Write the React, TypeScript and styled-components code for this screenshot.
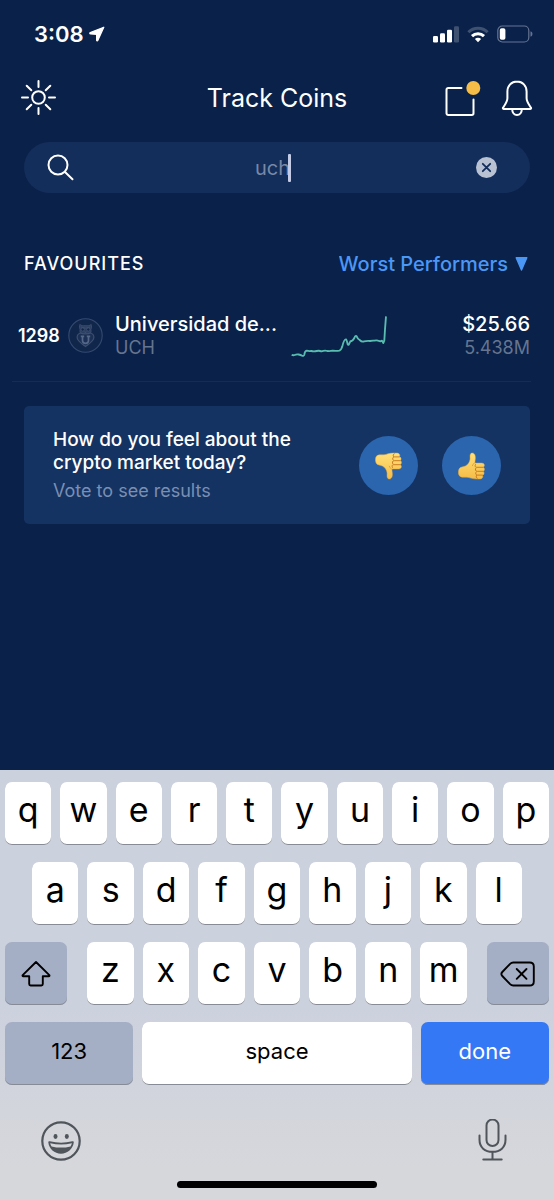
import React, { useState } from "react";
import styled, { createGlobalStyle } from "styled-components";

const GlobalStyle = createGlobalStyle`
  * { box-sizing: border-box; }
  body { margin: 0; background: #0a214a; }
  body, button, input, select { font-family: Inter, "Liberation Sans", sans-serif; }
  button { margin: 0; padding: 0; border: 0; background: none; color: inherit; cursor: pointer; }
  svg { display: block; flex: none; }
`;

const Screen = styled.div`
  display: flex;
  flex-direction: column;
  min-height: 100vh;
  background: #0a214a;
  color: #fff;
`;

const StatusBar = styled.div`
  display: flex;
  align-items: center;
  justify-content: space-between;
  height: 68px;
  padding: 0 21px 0 34px;
`;

const StatusGroup = styled.div<{ $gap: number }>`
  display: flex;
  align-items: center;
  gap: ${(p) => p.$gap}px;
`;

const Clock = styled.span`
  font-size: 22px;
  font-weight: 600;
  line-height: 28px;
`;

const Header = styled.header`
  display: grid;
  grid-template-columns: 1fr auto 1fr;
  align-items: center;
  height: 60px;
  padding: 0 21px;
`;

const HeaderActions = styled.div`
  display: flex;
  justify-content: flex-end;
  gap: 20px;
`;

const IconButton = styled.button`
  display: flex;
  justify-self: start;
`;

const Title = styled.h1`
  margin: 0;
  font-size: 25px;
  font-weight: 400;
  line-height: 32px;
`;

const SearchBar = styled.div`
  display: flex;
  align-items: center;
  height: 51px;
  margin: 14px 24px 0;
  padding: 0 33px 0 23px;
  border-radius: 26px;
  background: #132e5b;
`;

const SearchEntry = styled.label`
  display: flex;
  flex: 1;
  align-items: center;
  justify-content: center;
  padding-right: 4px;
`;

const SearchInput = styled.input`
  field-sizing: content;
  max-width: 100%;
  height: 32px;
  padding: 0;
  border: 0;
  outline: 0;
  background: none;
  color: #7888a5;
  caret-color: transparent;
  font-size: 20px;
`;

const Caret = styled.span`
  width: 3px;
  height: 28px;
  margin-left: -2px;
  border-radius: 1px;
  background: #c3cbe6;
`;

const SectionHeader = styled.div`
  display: flex;
  align-items: center;
  justify-content: space-between;
  height: 48px;
  margin-top: 47px;
  padding: 0 26px 0 24px;
`;

const SectionTitle = styled.h2`
  margin: 0;
  font-size: 18px;
  font-weight: 500;
  line-height: 24px;
  letter-spacing: 1px;
  text-transform: uppercase;
`;

const SortLabel = styled.label`
  display: flex;
  align-items: center;
  gap: 7px;
  color: #4a97f5;
`;

const SortSelect = styled.select`
  field-sizing: content;
  appearance: none;
  padding: 0;
  border: 0;
  outline: 0;
  background: none;
  color: inherit;
  font-size: 20px;
  font-weight: 500;
  line-height: 28px;
`;

const CoinList = styled.ul`
  margin: 0 23px 0 12px;
  padding: 0;
  list-style: none;
`;

const CoinRow = styled.li`
  display: flex;
  align-items: center;
  height: 94px;
  padding: 2px 1px 0 6px;
  border-bottom: 1px solid #152c56;
`;

const Rank = styled.span`
  width: 50px;
  font-size: 18px;
  font-weight: 600;
  line-height: 24px;
`;

const CoinName = styled.div`
  flex: 1;
  min-width: 0;
  padding-left: 12px;
  white-space: nowrap;
`;

const CoinPrice = styled.div`
  width: 143px;
  text-align: right;
`;

const Primary = styled.div`
  font-size: 20px;
  font-weight: 500;
  line-height: 24px;
`;

const Secondary = styled.div`
  color: #66758f;
  font-size: 18px;
  line-height: 24px;
`;

const PollCard = styled.section`
  display: flex;
  align-items: center;
  justify-content: space-between;
  margin: 24px 24px 32px;
  padding: 22px 29px 21px;
  border-radius: 5px;
  background: #143362;
`;

const PollQuestion = styled.h2`
  max-width: 260px;
  margin: 0;
  font-size: 19px;
  font-weight: 500;
  line-height: 23px;
`;

const PollHint = styled.p`
  margin: 5px 0 0;
  color: #7a8fb3;
  font-size: 18px;
  line-height: 24px;
`;

const PollActions = styled.div`
  display: flex;
  gap: 24px;
`;

const VoteButton = styled.button`
  display: grid;
  place-items: center;
  width: 59px;
  height: 59px;
  border-radius: 50%;
  background: #2b65ad;
`;

const Keyboard = styled.div`
  display: flex;
  flex-direction: column;
  gap: 17px;
  margin-top: auto;
  padding: 12px 0;
  background: linear-gradient(#ccd1de 55%, #d6d7db 92%);
  color: #000;
`;

const KeyRow = styled.div<{ $inset?: number }>`
  display: flex;
  gap: 9px;
  padding: 0 ${(p) => p.$inset ?? 5}px;
`;

const LetterGroup = styled.div`
  display: flex;
  flex: 1;
  gap: 9px;
  margin: 0 11px;
`;

type KeyTone = "light" | "dark" | "primary";

const keyTones: Record<KeyTone, string> = {
  light: "background: #fff;",
  dark: "background: #a4afc5;",
  primary: "background: #3478f6; color: #fff;",
};

const Key = styled.button<{ $tone?: KeyTone }>`
  display: flex;
  flex: 1;
  align-items: center;
  justify-content: center;
  min-width: 0;
  height: 63px;
  padding-bottom: 8px;
  border-radius: 7px;
  box-shadow: inset 0 -1px 0 #878b95;
  font-size: 34px;
  font-weight: 400;
  line-height: 40px;
  ${(p) => keyTones[p.$tone ?? "light"]}
`;

const SideKey = styled(Key)`
  flex: 0 0 62px;
  padding: 0;
`;

const WordKey = styled(Key)<{ $grow: number }>`
  flex: ${(p) => p.$grow} 1 0;
  padding-bottom: 5px;
  font-size: 22px;
`;

const KeyboardFooter = styled.div`
  display: flex;
  align-items: center;
  justify-content: space-between;
  height: 46px;
  margin-top: 16px;
  padding: 0 46px 0 40px;
`;

const HomeIndicator = styled.div`
  align-self: center;
  width: 36%;
  height: 7px;
  border-radius: 4px;
  background: #000;
`;

const LocationArrow = () => (
  <svg width="16" height="16" viewBox="0 0 16 16" aria-hidden="true">
    <path d="M14.800 1.200 8.800 14.400c-.3.700-1.200.5-1.200-.2V8.300L1.500 8C.600 7.900.5 6.900 1.300 6.600Z" fill="#fff" stroke="#fff" strokeWidth="1.200" strokeLinejoin="round" />
  </svg>
);

const SignalIcon = () => (
  <svg width="26" height="17" viewBox="0 0 26 17" aria-hidden="true" fill="#fff">
    <rect x="0" y="10" width="5" height="6.500" rx="1.300" />
    <rect x="7" y="7.300" width="5" height="9.200" rx="1.300" />
    <rect x="14" y="3.700" width="5" height="12.800" rx="1.300" />
    <rect x="21" y="0.300" width="5" height="16.200" rx="1.300" opacity=".22" />
  </svg>
);

const WifiIcon = () => (
  <svg width="22" height="17" viewBox="0 0 22 17" aria-hidden="true" fill="none" stroke="#fff" strokeWidth="3">
    <path d="M1.400 6.300a13.600 13.600 0 0 1 19.200 0" opacity=".22" />
    <path d="M5 10.100a8.600 8.600 0 0 1 12 0" />
    <path d="M11 16.200 7.900 13a4.400 4.400 0 0 1 6.200 0Z" fill="#fff" stroke="none" />
  </svg>
);

const BatteryIcon = () => (
  <svg width="36" height="18" viewBox="0 0 36 18" aria-hidden="true">
    <rect x=".8" y="1" width="31" height="16" rx="4.500" fill="none" stroke="#667493" strokeWidth="1.200" />
    <rect x="2.800" y="3.200" width="5.600" height="11.600" rx="1.800" fill="#fff" />
    <path d="M33.500 6.300c2.600.8 2.600 4.600 0 5.400Z" fill="#667493" />
  </svg>
);

const SunIcon = () => (
  <svg width="35" height="37" viewBox="1 1 35 37" aria-hidden="true" fill="none" stroke="#fff" strokeWidth="2" strokeLinecap="round">
    <circle cx="18.500" cy="18.500" r="6.300" />
    <path d="M18.500 2v6M18.500 29v6M2 18.500h6M29 18.500h6M6.700 6.700l4.600 4.600M25.700 25.700l4.600 4.600M30.300 6.700l-4.600 4.600M11.300 25.700l-4.600 4.600" />
  </svg>
);

const NewsIcon = () => (
  <svg width="36" height="37" viewBox="0 0 36 37" aria-hidden="true">
    <path d="M16.500 8H3.200a1.700 1.700 0 0 0-1.700 1.700v23.600A1.700 1.700 0 0 0 3.200 35h23.600a1.700 1.700 0 0 0 1.700-1.700V19.500" fill="none" stroke="#fff" strokeWidth="2" strokeLinecap="round" />
    <circle cx="28.300" cy="8" r="7" fill="#f5bd47" />
  </svg>
);

const BellIcon = () => (
  <svg width="32" height="37" viewBox="0 0 32 37" aria-hidden="true" fill="none" stroke="#fff" strokeWidth="2" strokeLinejoin="round">
    <path d="M16 1.500c-5.600 0-9.600 4.200-9.600 10v6.800c0 3.400-2.300 6.300-4.300 9.300-.4.700-.1 1.500.8 1.500h26.200c.9 0 1.200-.8.8-1.500-2-3-4.300-5.900-4.300-9.300v-6.800c0-5.800-4-10-9.600-10Z" />
    <path d="M11.200 29.200c0 3.400 2 5.700 4.800 5.700s4.800-2.300 4.800-5.700" />
  </svg>
);

const SearchIcon = () => (
  <svg width="27" height="27" viewBox="0 0 27 27" aria-hidden="true" fill="none" stroke="#fff" strokeWidth="2" strokeLinecap="round">
    <circle cx="11" cy="11" r="9.500" />
    <path d="m18 18 7.500 7.300" />
  </svg>
);

const ClearIcon = () => (
  <svg width="21" height="21" viewBox="0 0 21 21" aria-hidden="true">
    <circle cx="10.500" cy="10.500" r="10.500" fill="#b9c2d2" />
    <path d="m6.800 6.800 7.400 7.400m0-7.400-7.400 7.400" stroke="#132e5b" strokeWidth="1.800" strokeLinecap="round" />
  </svg>
);

const TriangleIcon = () => (
  <svg width="13" height="14" viewBox="0 0 13 14" aria-hidden="true">
    <path d="M1.200.8h10.600L6.500 13Z" fill="#4a97f5" stroke="#4a97f5" strokeWidth="1.400" strokeLinejoin="round" />
  </svg>
);

const OwlCrest = () => (
  <svg width="35" height="35" viewBox="0 0 35 35" aria-hidden="true" fill="none" stroke="#3d4f70">
    <circle cx="17.500" cy="17.500" r="16.700" fill="#11264b" stroke="#354a6e" strokeWidth="1.100" />
    <path d="M11.800 6.500c1.500 1 2.500 1.300 4 1.300h3.400c1.500 0 2.500-.3 4-1.300.3 1.700.3 3.500-.3 5.200.3 1.700 0 3-.8 4.300h-9.200c-.8-1.300-1.100-2.600-.8-4.300-.6-1.700-.6-3.500-.3-5.200Z" fill="#2a3e61" />
    <circle cx="14.700" cy="11.500" r="1.700" fill="#11264b" />
    <circle cx="20.300" cy="11.500" r="1.700" fill="#11264b" />
    <path d="m16.700 13.300.8 1.700.8-1.700M13 9l4.500 1.200L22 9" />
    <path d="M12.800 15c-2.700.4-4 2.600-3.600 5 .5 3.200 4.200 5.500 8.300 8.500 4.100-3 7.800-5.300 8.300-8.500.4-2.400-.9-4.600-3.600-5-1.500 1.300-7.900 1.300-9.400 0Z" fill="#1c3055" strokeWidth="1.200" />
    <path d="M12.800 18.300h3.400M18.800 18.300h3.400M14.500 18.300v4.200c0 3.800 6 3.800 6 0v-4.200" stroke="#56688a" strokeWidth="1.700" />
  </svg>
);

const Sparkline = () => (
  <svg width="96" height="42" viewBox="43 72 288 126" role="img" aria-label="Price history">
    <path
      d="M45 191Q50 194 54 192 60 189 66 190.500T76 194Q82 196 83 191 84 180 90 179 96 181 104 180 112 182 120 180 128 178 134 181 145 177 152 180 160 181 168 179 178 180 188 179 194 177 197 166 202 144 208 145 210 146 213 160 216 165 219 155 221 149 225 150 230 147 233 141 237 132 240 136 243 144 249 147 256 154 262 151 272 149 280 150 288 148 293 149 299 147 304 149L311 151 316 149 320 156 323 148 325 115 328 76"
      fill="none" stroke="#58bdb0" strokeWidth="5.500" strokeLinejoin="round"
    />
  </svg>
);

const ThumbIcon = ({ down = false }: { down?: boolean }) => {
  const id = down ? "skin-down" : "skin-up";
  return (
    <svg width="28" height="28" viewBox="0 0 28 28" aria-hidden="true">
      <defs>
        <linearGradient id={id} x1="0" y1={down ? "1" : "0"} x2="0" y2={down ? "0" : "1"}>
          <stop offset="0" stopColor="#ffe07a" />
          <stop offset="1" stopColor="#f6bd45" />
        </linearGradient>
      </defs>
      <g transform={down ? "matrix(1 0 0 -1 0 28)" : undefined}>
        <path
          d="M1.200 16.800c1.200-2.200 4.200-1.700 6.200-2.800 2.700-1.500 4.500-4.200 4.700-7 .1-1.800-.7-5.300 1.600-5.900 2.600-.7 3.700 2.200 3.700 4.600 0 2.300-.7 4-.4 5.400h6.800c3.200 0 3.200 3.700 1.200 4.200 2 .6 1.900 3.600.1 4.100 1.600.8 1.200 3.500-.7 3.800 1 1.200.3 3.500-2 3.700-4.600.3-8.400-.2-11.400-1.300-3.500-1.200-7 .5-9.200-1.400-1.700-1.400-1.700-5.400-.6-7.400Z"
          fill={`url(#${id})`} stroke="#e9a83c" strokeWidth=".5"
        />
        <path d="M25 15.300h-6.300c-1.600 0-1.900-1.400-1.300-2.700M25 19.300h-5.800c-1.800 0-2.400-1.800-1.300-3.300M24.400 23.100h-4.800c-1.900 0-2.600-1.800-1.400-3.200M19.300 26.300c-1.300-.4-1.600-1.900-.6-3" fill="none" stroke="#cb7c22" strokeWidth="1" strokeLinecap="round" />
        <path d="M16.500 10.900c-.8 1-1.900 1.700-2.200 2.800" fill="none" stroke="#dd972f" strokeWidth=".8" strokeLinecap="round" />
      </g>
    </svg>
  );
};

const ShiftIcon = () => (
  <svg width="30" height="28" viewBox="0 0 30 28" aria-hidden="true" fill="none" stroke="#000" strokeWidth="1.900" strokeLinejoin="round">
    <path d="M15 2 1.700 15.200c-.4.500-.2 1 .5 1h6v7.900c0 .9.500 1.400 1.400 1.400h10.800c.9 0 1.400-.5 1.400-1.400v-7.900h6c.7 0 .9-.5.5-1Z" />
  </svg>
);

const BackspaceIcon = () => (
  <svg width="36" height="28" viewBox="0 0 36 28" aria-hidden="true" fill="none" stroke="#000" strokeWidth="1.900" strokeLinejoin="round" strokeLinecap="round">
    <path d="M13.200 2.500h16.500c2.700 0 4.100 1.400 4.100 4.100v14.800c0 2.700-1.400 4.100-4.100 4.100H13.200c-1.300 0-2.200-.4-3.100-1.300L2.300 16c-1.200-1.300-1.200-2.700 0-4l7.800-8.200c.9-.9 1.800-1.300 3.100-1.300Z" />
    <path d="m16.700 9 9.800 9.800M26.500 9l-9.800 9.800" />
  </svg>
);

const EmojiIcon = () => (
  <svg width="42" height="42" viewBox="0 0 42 42" aria-hidden="true">
    <circle cx="21" cy="21" r="18.700" fill="none" stroke="#50545b" strokeWidth="2.200" />
    <ellipse cx="15.500" cy="16.500" rx="2" ry="2.400" fill="#50545b" />
    <ellipse cx="26.800" cy="16.500" rx="2" ry="2.400" fill="#50545b" />
    <path d="M8.300 22.300c0-1 .5-1.300 1.500-1 7.500 1.900 15 1.900 22.500 0 1-.3 1.500 0 1.500 1C33 29 27.500 33.700 21 33.700S9 29 8.300 22.300Z" fill="#50545b" />
    <path d="M10.200 23.200c7.200 1.800 14.500 1.800 21.700 0-.3 1.300-.8 2.400-1.400 3.200-6.300 1.600-12.600 1.600-18.900 0-.7-.9-1.200-2-1.400-3.200Z" fill="#d5d7dc" />
  </svg>
);

const MicIcon = () => (
  <svg width="30" height="44" viewBox="0 1 30 44" aria-hidden="true" fill="none" stroke="#50545b" strokeWidth="2" strokeLinecap="round">
    <rect x="8.500" y="1.500" width="12" height="26.500" rx="6" />
    <path d="M1.500 17.500v4.300c0 7.700 5.300 12 13 12s13-4.300 13-12v-4.300M14.500 33.800v7.500M5.300 41.500h18.400" />
  </svg>
);

const letterKeys = (letters: string) => [...letters].map((letter) => <Key key={letter} type="button">{letter}</Key>);

export default function App() {
  const [query, setQuery] = useState("uch");

  return (
    <Screen>
      <GlobalStyle />
      <StatusBar>
        <StatusGroup $gap={5}>
          <Clock>3:08</Clock>
          <LocationArrow />
        </StatusGroup>
        <StatusGroup $gap={8}>
          <SignalIcon />
          <WifiIcon />
          <BatteryIcon />
        </StatusGroup>
      </StatusBar>

      <Header>
        <IconButton type="button" aria-label="Appearance"><SunIcon /></IconButton>
        <Title>Track Coins</Title>
        <HeaderActions>
          <IconButton type="button" aria-label="News"><NewsIcon /></IconButton>
          <IconButton type="button" aria-label="Alerts"><BellIcon /></IconButton>
        </HeaderActions>
      </Header>

      <SearchBar>
        <SearchIcon />
        <SearchEntry>
          <SearchInput aria-label="Search coins" value={query} onChange={(e) => setQuery(e.target.value)} />
          <Caret />
        </SearchEntry>
        <IconButton type="button" aria-label="Clear search" onClick={() => setQuery("")}><ClearIcon /></IconButton>
      </SearchBar>

      <SectionHeader>
        <SectionTitle>Favourites</SectionTitle>
        <SortLabel>
          <SortSelect aria-label="Sort by">
            <option>Worst Performers</option>
          </SortSelect>
          <TriangleIcon />
        </SortLabel>
      </SectionHeader>

      <CoinList>
        <CoinRow>
          <Rank>1298</Rank>
          <OwlCrest />
          <CoinName>
            <Primary>Universidad de...</Primary>
            <Secondary>UCH</Secondary>
          </CoinName>
          <Sparkline />
          <CoinPrice>
            <Primary>$25.66</Primary>
            <Secondary>5.438M</Secondary>
          </CoinPrice>
        </CoinRow>
      </CoinList>

      <PollCard>
        <div>
          <PollQuestion>How do you feel about the crypto market today?</PollQuestion>
          <PollHint>Vote to see results</PollHint>
        </div>
        <PollActions>
          <VoteButton type="button" aria-label="Thumbs down"><ThumbIcon down /></VoteButton>
          <VoteButton type="button" aria-label="Thumbs up"><ThumbIcon /></VoteButton>
        </PollActions>
      </PollCard>

      <Keyboard>
        <KeyRow>{letterKeys("qwertyuiop")}</KeyRow>
        <KeyRow $inset={32}>{letterKeys("asdfghjkl")}</KeyRow>
        <KeyRow>
          <SideKey type="button" $tone="dark" aria-label="Shift"><ShiftIcon /></SideKey>
          <LetterGroup>{letterKeys("zxcvbnm")}</LetterGroup>
          <SideKey type="button" $tone="dark" aria-label="Delete"><BackspaceIcon /></SideKey>
        </KeyRow>
        <KeyRow>
          <WordKey type="button" $tone="dark" $grow={10}>123</WordKey>
          <WordKey type="button" $grow={21}>space</WordKey>
          <WordKey type="button" $tone="primary" $grow={10}>done</WordKey>
        </KeyRow>
        <KeyboardFooter>
          <IconButton type="button" aria-label="Emoji"><EmojiIcon /></IconButton>
          <IconButton type="button" aria-label="Dictate"><MicIcon /></IconButton>
        </KeyboardFooter>
        <HomeIndicator />
      </Keyboard>
    </Screen>
  );
}
